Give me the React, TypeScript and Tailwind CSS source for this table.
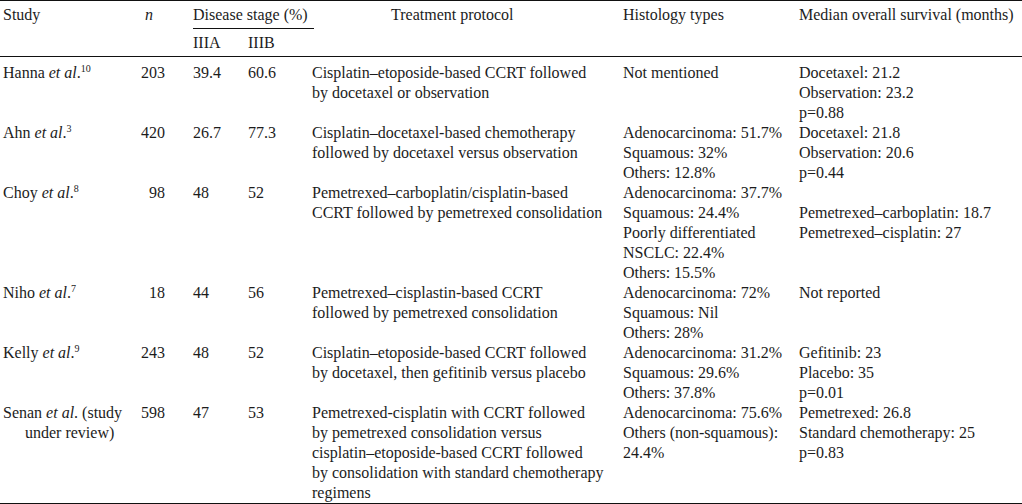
import type { ReactNode } from 'react';

type Trial = {
  author: string;
  note?: string;
  refNo?: string;
  n: string;
  stageA: string;
  stageB: string;
  protocol: string[];
  histology: string[];
  survival: string[];
};

const TRIALS: Trial[] = [
  {
    author: 'Hanna',
    refNo: '10',
    n: '203',
    stageA: '39.4',
    stageB: '60.6',
    protocol: ['Cisplatin–etoposide-based CCRT followed', 'by docetaxel or observation'],
    histology: ['Not mentioned'],
    survival: ['Docetaxel: 21.2', 'Observation: 23.2', 'p=0.88'],
  },
  {
    author: 'Ahn',
    refNo: '3',
    n: '420',
    stageA: '26.7',
    stageB: '77.3',
    protocol: ['Cisplatin–docetaxel-based chemotherapy', 'followed by docetaxel versus observation'],
    histology: ['Adenocarcinoma: 51.7%', 'Squamous: 32%', 'Others: 12.8%'],
    survival: ['Docetaxel: 21.8', 'Observation: 20.6', 'p=0.44'],
  },
  {
    author: 'Choy',
    refNo: '8',
    n: '98',
    stageA: '48',
    stageB: '52',
    protocol: ['Pemetrexed–carboplatin/cisplatin-based', 'CCRT followed by pemetrexed consolidation'],
    histology: [
      'Adenocarcinoma: 37.7%',
      'Squamous: 24.4%',
      'Poorly differentiated',
      'NSCLC: 22.4%',
      'Others: 15.5%',
    ],
    survival: ['', 'Pemetrexed–carboplatin: 18.7', 'Pemetrexed–cisplatin: 27'],
  },
  {
    author: 'Niho',
    refNo: '7',
    n: '18',
    stageA: '44',
    stageB: '56',
    protocol: ['Pemetrexed–cisplastin-based CCRT', 'followed by pemetrexed consolidation'],
    histology: ['Adenocarcinoma: 72%', 'Squamous: Nil', 'Others: 28%'],
    survival: ['Not reported'],
  },
  {
    author: 'Kelly',
    refNo: '9',
    n: '243',
    stageA: '48',
    stageB: '52',
    protocol: ['Cisplatin–etoposide-based CCRT followed', 'by docetaxel, then gefitinib versus placebo'],
    histology: ['Adenocarcinoma: 31.2%', 'Squamous: 29.6%', 'Others: 37.8%'],
    survival: ['Gefitinib: 23', 'Placebo: 35', 'p=0.01'],
  },
  {
    author: 'Senan',
    note: '(study',
    n: '598',
    stageA: '47',
    stageB: '53',
    protocol: [
      'Pemetrexed-cisplatin with CCRT followed',
      'by pemetrexed consolidation versus',
      'cisplatin–etoposide-based CCRT followed',
      'by consolidation with standard chemotherapy',
      'regimens',
    ],
    histology: ['Adenocarcinoma: 75.6%', 'Others (non-squamous):', '24.4%'],
    survival: ['Pemetrexed: 26.8', 'Standard chemotherapy: 25', 'p=0.83'],
  },
];

function Lines({ items }: { items: string[] }) {
  return (
    <>
      {items.map((line, i) => (
        <div key={i} className="h-[20px] whitespace-nowrap">
          {line}
        </div>
      ))}
    </>
  );
}

function StudyCell({ trial }: { trial: Trial }): ReactNode {
  return (
    <>
      <div className="h-[20px] whitespace-nowrap">
        {trial.author} <i>et al</i>.
        {trial.refNo && (
          <span className="relative -top-[6px] text-[10px] leading-[0]">{trial.refNo}</span>
        )}
        {trial.note && <> {trial.note}</>}
      </div>
      {trial.note && <div className="h-[20px] pl-[22px] whitespace-nowrap">under review)</div>}
    </>
  );
}

export default function App() {
  return (
    <div className="w-[1022px] h-[504px] overflow-hidden bg-white text-[#1c1c1c] font-[family-name:Liberation_Serif,Times_New_Roman,serif] text-[16px] leading-[20px]">
      <table className="w-[1022px] table-fixed border-collapse">
        <colgroup>
          <col className="w-[130px]" />
          <col className="w-[60px]" />
          <col className="w-[55px]" />
          <col className="w-[64px]" />
          <col className="w-[311px]" />
          <col className="w-[176px]" />
          <col className="w-[226px]" />
        </colgroup>
        <thead>
          <tr className="border-t border-[#111] align-top">
            <th className="h-[28px] p-0 pt-[4px] pl-[3px] text-left font-normal" rowSpan={2}>
              Study
            </th>
            <th className="p-0 pt-[4px] pr-[37px] text-right font-normal italic" rowSpan={2}>
              n
            </th>
            <th className="p-0 pt-[4px] text-left font-normal" colSpan={2}>
              <div className="ml-[3px] w-[121px] h-[24px] border-b border-[#111] whitespace-nowrap">
                Disease stage (%)
              </div>
            </th>
            <th className="p-0 pt-[4px] pl-[82px] text-left font-normal whitespace-nowrap" rowSpan={2}>
              Treatment protocol
            </th>
            <th className="p-0 pt-[4px] pl-[3px] text-left font-normal whitespace-nowrap" rowSpan={2}>
              Histology types
            </th>
            <th className="p-0 pt-[4px] pl-[3px] text-left font-normal whitespace-nowrap" rowSpan={2}>
              Median overall survival (months)
            </th>
          </tr>
          <tr className="border-b border-[#111] align-top">
            <th className="h-[27px] p-0 pt-[4px] pl-[3px] text-left font-normal">IIIA</th>
            <th className="p-0 pt-[4px] pl-[3px] text-left font-normal">IIIB</th>
          </tr>
        </thead>
        <tbody>
          {TRIALS.map((trial, idx) => {
            const first = idx === 0 ? 'pt-[6px]' : '';
            return (
              <tr key={trial.author} className="align-top">
                <td className={`${first} p-0 pl-[3px]`}>
                  <StudyCell trial={trial} />
                </td>
                <td className={`${first} p-0 pr-[25px] text-right`}>{trial.n}</td>
                <td className={`${first} p-0 pl-[3px]`}>{trial.stageA}</td>
                <td className={`${first} p-0 pl-[3px]`}>{trial.stageB}</td>
                <td className={`${first} p-0 pl-[3px]`}>
                  <Lines items={trial.protocol} />
                </td>
                <td className={`${first} p-0 pl-[3px]`}>
                  <Lines items={trial.histology} />
                </td>
                <td className={`${first} p-0 pl-[3px]`}>
                  <Lines items={trial.survival} />
                </td>
              </tr>
            );
          })}
          <tr className="border-t border-[#111]">
            <td colSpan={7} className="h-[1px] p-0" />
          </tr>
        </tbody>
      </table>
    </div>
  );
}
